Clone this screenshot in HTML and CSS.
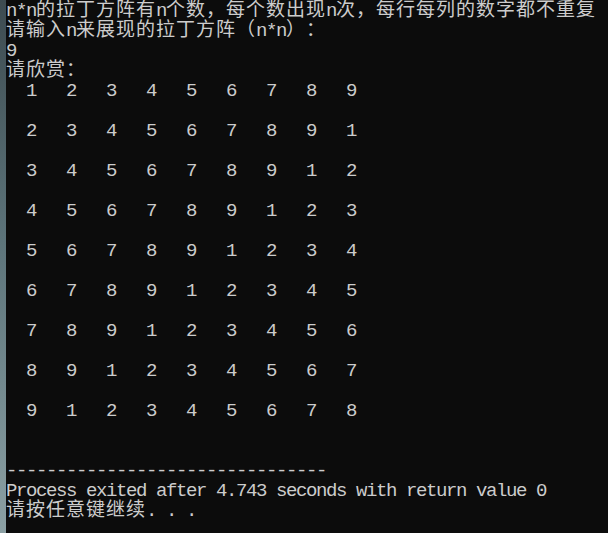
FILE: index.html
```html
<!DOCTYPE html>
<html lang="zh">
<head>
<meta charset="utf-8">
<title>Console</title>
<link rel="stylesheet" href="styles.css">
</head>
<body>
<div class="window">
<div class="edge"></div>
<pre class="console">n*n<span class="cjk">的拉丁方阵有</span>n<span class="cjk">个数，每个数出现</span>n<span class="cjk">次，每行每列的数字都不重复</span>
<span class="cjk">请输入</span>n<span class="cjk">来展现的拉丁方阵（</span>n*n<span class="cjk">）：</span>
9
<span class="cjk">请欣赏：</span>
  1   2   3   4   5   6   7   8   9

  2   3   4   5   6   7   8   9   1

  3   4   5   6   7   8   9   1   2

  4   5   6   7   8   9   1   2   3

  5   6   7   8   9   1   2   3   4

  6   7   8   9   1   2   3   4   5

  7   8   9   1   2   3   4   5   6

  8   9   1   2   3   4   5   6   7

  9   1   2   3   4   5   6   7   8


--------------------------------
Process exited after 4.743 seconds with return value 0
<span class="cjk">请按任意键继续</span>. . .
</pre>
</div>
</body>
</html>
```

FILE: styles.css
```css
html, body {
  margin: 0;
  padding: 0;
  background: #0c0c0c;
}

.window {
  display: flex;
  width: 608px;
  height: 533px;
  overflow: hidden;
  background: #0c0c0c;
}

.edge {
  flex: 0 0 6px;
  background: linear-gradient(to bottom, #3d4b50 0%, #5d747a 45%, #8ba0a4 100%);
}

.console {
  margin: 0;
  padding: 1px 0 0 0;
  color: #cccccc;
  font-family: "Liberation Mono", monospace;
  font-size: 19px;
  letter-spacing: -1.4px;
  line-height: 20px;
  white-space: pre;
  text-spacing-trim: space-all;
}

.cjk {
  font-family: "Noto Sans CJK SC", sans-serif;
  font-size: 19px;
  letter-spacing: 1px;
  line-height: 0;
  font-weight: 400;
  text-spacing-trim: space-all;
}
```
